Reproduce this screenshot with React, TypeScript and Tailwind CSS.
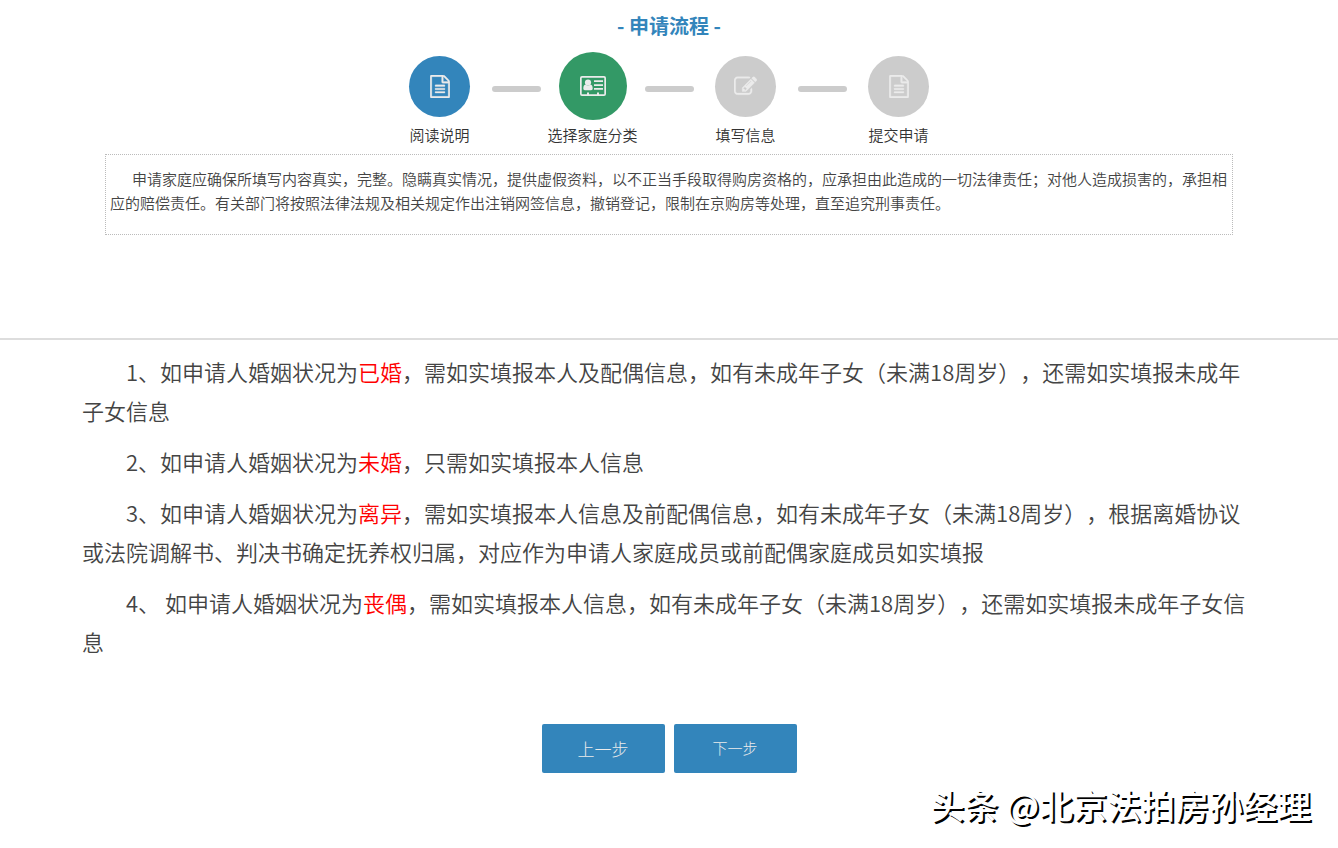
import { Fragment, type ReactNode } from 'react';

const FileIcon = () => (
  <svg viewBox="0 0 1536 1792" className="h-[23px] w-5" fill="currentColor" stroke="currentColor" strokeWidth="24" aria-hidden="true">
    <path d="M1468 380q28 28 48 76t20 88v1152q0 40-28 68t-68 28h-1344q-40 0-68-28t-28-68v-1600q0-40 28-68t68-28h896q40 0 88 20t76 48zm-444-244v376h376q-10-29-22-41l-313-313q-12-12-41-22zm384 1528v-1024h-416q-40 0-68-28t-28-68v-416h-768v1536h1280zm-1024-864q0-14 9-23t23-9h704q14 0 23 9t9 23v64q0 14-9 23t-23 9h-704q-14 0-23-9t-9-23v-64zm736 224q14 0 23 9t9 23v64q0 14-9 23t-23 9h-704q-14 0-23-9t-9-23v-64q0-14 9-23t23-9h704zm0 256q14 0 23 9t9 23v64q0 14-9 23t-23 9h-704q-14 0-23-9t-9-23v-64q0-14 9-23t23-9h704z" />
  </svg>
);

const CardIcon = () => (
  <svg viewBox="0 0 26 20" className="h-5 w-[26px]" fill="currentColor" aria-hidden="true">
    <path
      fillRule="evenodd"
      d="M2 0h22a2 2 0 0 1 2 2v16a2 2 0 0 1-2 2H2a2 2 0 0 1-2-2V2a2 2 0 0 1 2-2zM1.700 2v15.800a.5.5 0 0 0 .5.5h4.800V16.500h2v1.800h8v-1.800h2v1.800h4.800a.5.5 0 0 0 .5-.5V2.200a.5.5 0 0 0-.5-.5H2.200a.5.5 0 0 0-.5.500z"
    />
    <circle cx="8" cy="6.500" r="3.100" />
    <path d="M5.500 8.500c-1.500.3-2.200 1.700-2.200 4 0 1 .7 1.700 1.600 1.700h6.200c.9 0 1.600-.7 1.600-1.700 0-2.300-.7-3.700-2.200-4-.7.700-1.500 1.100-2.500 1.100s-1.800-.4-2.500-1.100z" />
    <path d="M14 4.300h9V6h-9zM14 8.200h9v1.700h-9zM14 12h9v1.700h-9z" />
  </svg>
);

const EditIcon = () => (
  <svg viewBox="0 0 1792 1792" className="size-[23px]" fill="currentColor" stroke="currentColor" strokeWidth="24" aria-hidden="true">
    <path d="M888 1184l116-116-152-152-116 116v56h96v96h56zm440-720q-16-16-33 1l-350 350q-17 17-1 33t33-1l350-350q17-17 1-33zm80 594v190q0 119-84.5 203.5t-203.5 84.5h-832q-119 0-203.5-84.5t-84.5-203.5v-832q0-119 84.5-203.5t203.5-84.5h832q63 0 117 25 15 7 18 23 3 17-9 29l-49 49q-14 14-32 8-23-6-45-6h-832q-66 0-113 47t-47 113v832q0 66 47 113t113 47h832q66 0 113-47t47-113v-126q0-13 9-22l64-64q15-15 35-7t20 29zm-96-738l288 288-672 672h-288v-288zm444 132l-92 92-288-288 92-92q28-28 68-28t68 28l152 152q28 28 28 68t-28 68z" />
  </svg>
);

type Step = { label: string; icon: ReactNode; circle: string };

const steps: Step[] = [
  { label: '阅读说明', icon: <FileIcon />, circle: 'size-[61px] bg-[#3385bb] text-[#ebebeb]' },
  { label: '选择家庭分类', icon: <CardIcon />, circle: 'size-[68px] bg-[#339966] text-[#ebebeb]' },
  { label: '填写信息', icon: <EditIcon />, circle: 'size-[61px] bg-[#cccccc] text-[#ebebeb]' },
  { label: '提交申请', icon: <FileIcon />, circle: 'size-[61px] bg-[#cccccc] text-[#ebebeb]' },
];

const Red = ({ children }: { children: ReactNode }) => <span className="text-[#ff0000]">{children}</span>;

export default function App() {
  return (
    <main className="bg-white pb-5 font-['Noto_Sans_CJK_SC',sans-serif] font-[350] text-[#444444] [text-spacing-trim:space-all]">
      <h1 className="pt-3 text-center text-xl leading-7 font-bold text-[#3385bb]">- 申请流程 -</h1>

      <ol className="mt-3 flex justify-center">
        {steps.map((step, i) => (
          <Fragment key={step.label}>
            {i > 0 && <li aria-hidden="true" className="mt-[34px] h-[6px] w-[49px] rounded-full bg-[#cccccc]" />}
            <li className="flex w-[104px] flex-col items-center">
              <div className="flex h-[68px] items-center">
                <div className={`flex items-center justify-center rounded-full ${step.circle}`}>{step.icon}</div>
              </div>
              <span className="mt-[3px] text-[15px] leading-6 whitespace-nowrap text-[#333333]">{step.label}</span>
            </li>
          </Fragment>
        ))}
      </ol>

      <p className="mx-[105px] mt-[7px] border border-dotted border-[#bbbbbb] px-1 pt-3 pb-[19px] indent-[22px] text-[15px] leading-6">
        申请家庭应确保所填写内容真实，完整。隐瞒真实情况，提供虚假资料，以不正当手段取得购房资格的，应承担由此造成的一切法律责任；对他人造成损害的，承担相应的赔偿责任。有关部门将按照法律法规及相关规定作出注销网签信息，撤销登记，限制在京购房等处理，直至追究刑事责任。
      </p>

      <section className="mt-[103px] flex flex-col gap-3 border-t-2 border-[#dddddd] px-[82px] pt-3 text-[22px] leading-[39px]">
        <p className="indent-11">
          1、如申请人婚姻状况为<Red>已婚</Red>，需如实填报本人及配偶信息，如有未成年子女（未满18周岁），还需如实填报未成年子女信息
        </p>
        <p className="indent-11">
          2、如申请人婚姻状况为<Red>未婚</Red>，只需如实填报本人信息
        </p>
        <p className="indent-11">
          3、如申请人婚姻状况为<Red>离异</Red>，需如实填报本人信息及前配偶信息，如有未成年子女（未满18周岁），根据离婚协议或法院调解书、判决书确定抚养权归属，对应作为申请人家庭成员或前配偶家庭成员如实填报
        </p>
        <p className="indent-11">
          4、&nbsp;如申请人婚姻状况为<Red>丧偶</Red>，需如实填报本人信息，如有未成年子女（未满18周岁），还需如实填报未成年子女信息
        </p>
      </section>

      <div className="mt-[63px] flex justify-center gap-[9px] font-light text-[#ebebeb]">
        <button type="button" className="h-[49px] w-[123px] rounded-[2px] bg-[#3385bb] text-[17px]">
          上一步
        </button>
        <button type="button" className="h-[49px] w-[123px] rounded-[2px] bg-[#3385bb] text-[15px]">
          下一步
        </button>
      </div>

      <footer className="mt-[7px] pr-[27px] text-right text-[34px] leading-[50px] font-medium text-white [text-shadow:2px_2px_0_#000000]">
        头条 @北京法拍房孙经理
      </footer>
    </main>
  );
}
